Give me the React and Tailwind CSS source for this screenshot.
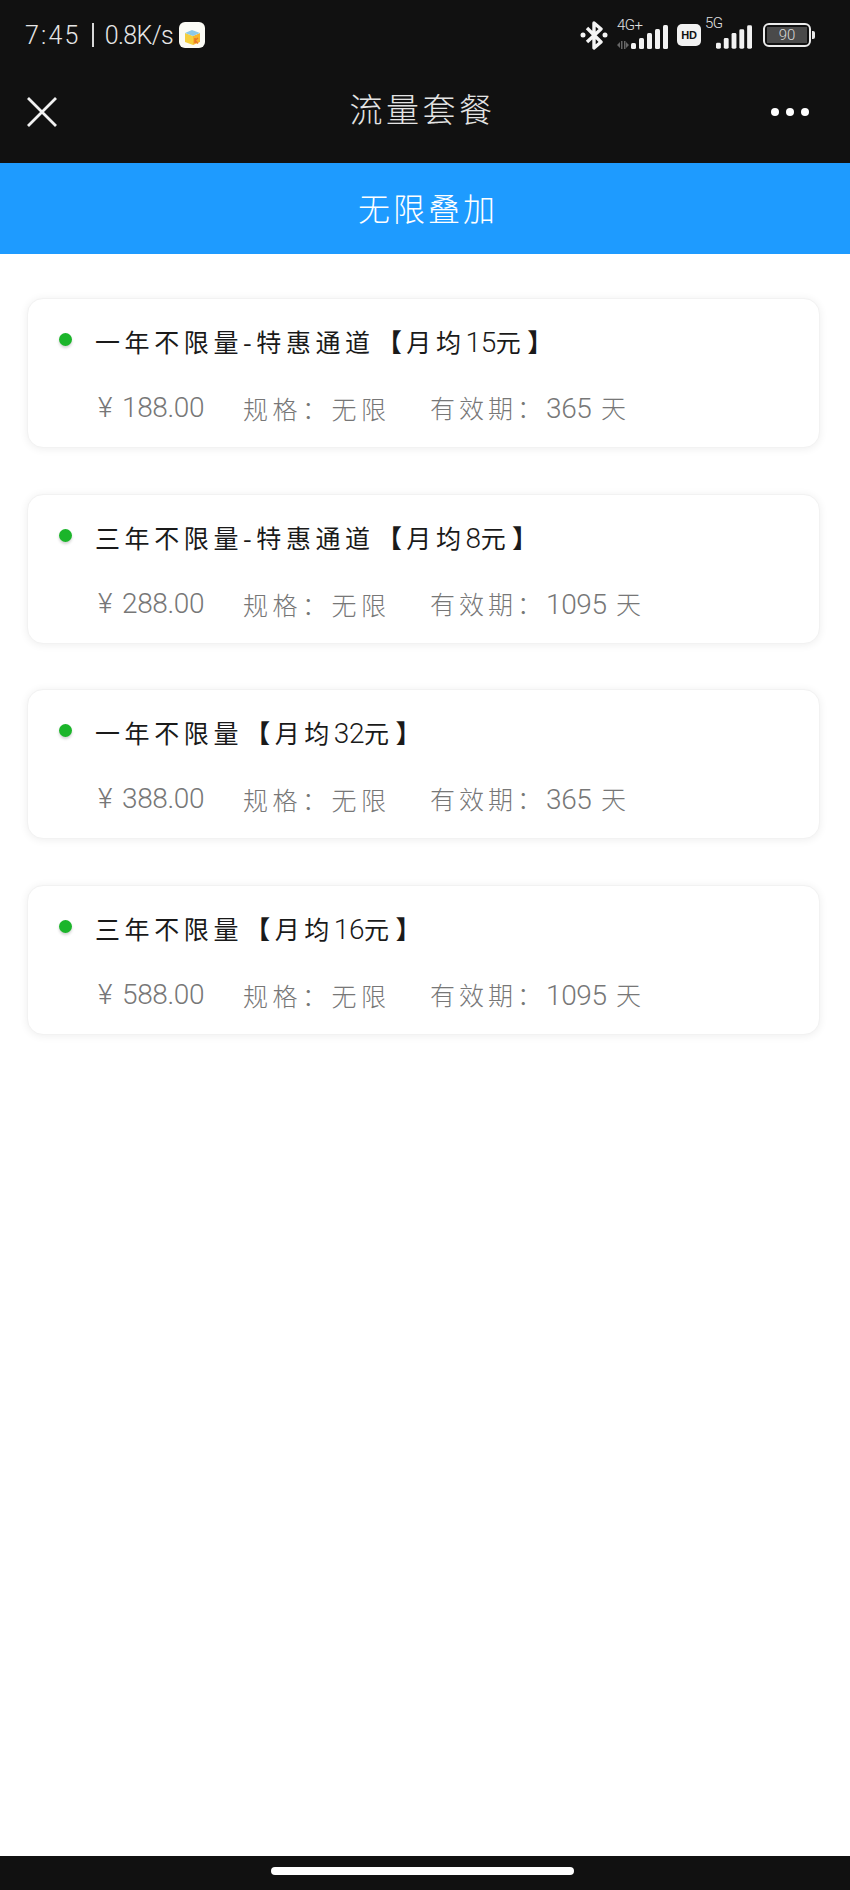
const cjk = "font-['Noto_Sans_CJK_SC','Noto_Sans',sans-serif]";

const plans = [
  { name: "一年不限量-特惠通道", deal: "15", price: "188.00", days: "365" },
  { name: "三年不限量-特惠通道", deal: "8", price: "288.00", days: "1095" },
  { name: "一年不限量", deal: "32", price: "388.00", days: "365" },
  { name: "三年不限量", deal: "16", price: "588.00", days: "1095" },
];

const Signal = ({ className }) => (
  <svg viewBox="0 0 37 24" className={className} fill="#f2f2f2">
    <rect x="0" y="18" width="5" height="6" rx="1.5" />
    <rect x="8" y="13" width="5" height="11" rx="1.5" />
    <rect x="16" y="8" width="5" height="16" rx="1.5" />
    <rect x="24" y="4" width="5" height="20" rx="1.5" />
    <rect x="32" y="0" width="5" height="24" rx="1.5" />
  </svg>
);

const StatusBar = () => (
  <div className="flex h-[68px] items-center justify-between pl-[25px] pr-[35px] pt-[2px] text-white">
    <div className="flex items-center font-['Roboto',sans-serif] text-[25px] font-light leading-none text-[#e6e6e6]">
      <span className="tracking-[2.2px]">7:45</span>
      <span className="mx-[11px] h-[24px] w-[2px] bg-[#d8d8d8]" />
      <span className="tracking-[-0.6px]">0.8K/s</span>
      <svg viewBox="0 0 26 26" className="ml-[6px] h-[26px] w-[26px]">
        <rect width="26" height="26" rx="6" fill="#fbfbf5" />
        <path d="M6 11l8 3v9l-8-3z" fill="#f5cf3d" />
        <path d="M14 14l7-3v9l-7 3z" fill="#f7b52c" />
        <path d="M6 11l7-3 8 3-7 3z" fill="#8cc9e8" />
        <path d="M16 16v5M16 18.500l3-2.500M16 18.500l3 3" stroke="#e8772a" strokeWidth="1.500" fill="none" />
      </svg>
    </div>
    <div className="flex items-center">
      {/* bluetooth */}
      <svg viewBox="0 0 28 30" className="h-[30px] w-[28px]" fill="none">
        <path d="M7 8l14 14-7 6V3l7 6L7 22" stroke="#f5f5f5" strokeWidth="3.400" strokeLinejoin="round" />
        <circle cx="3" cy="15" r="2.500" fill="#f5f5f5" />
        <circle cx="25" cy="15" r="2.500" fill="#f5f5f5" />
      </svg>
      <div className="relative ml-[9px] h-[28px] w-[51px]">
        <span className="absolute left-0 top-[-4px] font-['Roboto',sans-serif] text-[15px] font-light leading-[16px] tracking-[-0.5px] text-[#e0e0e0]">4G+</span>
        <svg viewBox="0 0 12 8" className="absolute bottom-0 left-0 h-[8px] w-[12px]" fill="#666">
          <path d="M0 4l3-3v6zM4 0h1.500v8H4zM7 0h1.500v8H7zM9 1l3 3-3 3z" />
        </svg>
        <Signal className="absolute bottom-0 right-0 h-[24px] w-[37px]" />
      </div>
      <div className="ml-[9px] flex h-[22px] w-[24px] items-center justify-center rounded-[5px] bg-[#f2f2f2] font-['Liberation_Sans',sans-serif] text-[11px] font-bold leading-none tracking-[-0.3px] text-[#111]">HD</div>
      <div className="relative ml-[4px] h-[28px] w-[47px]">
        <span className="absolute left-0 top-[-6px] font-['Roboto',sans-serif] text-[15px] font-light leading-[16px] tracking-[-0.5px] text-[#e0e0e0]">5G</span>
        <Signal className="absolute bottom-0 right-0 h-[24px] w-[36px]" />
      </div>
      <div className="ml-[11px] flex h-[24px] w-[48px] items-center justify-center rounded-[6px] border-2 border-[#ececec] p-[2px]">
        <div className="flex h-full w-full items-center justify-center bg-[#4a4a4a] font-['Roboto',sans-serif] text-[15px] font-light leading-none text-[#d8d8d8]">90</div>
      </div>
      <div className="ml-[1px] h-[8px] w-[3px] rounded-r-[2px] bg-[#ececec]" />
    </div>
  </div>
);

const num = "font-['Roboto',sans-serif] font-light tracking-[-0.4px]";

const PlanCard = ({ plan }) => (
  <div className="mb-[45.7px] h-[150px] rounded-[16px] border border-[#f2f2f2] bg-white pl-[31px] pt-[24px] shadow-[0_1px_8px_rgba(0,0,0,0.07)]">
    <div className="flex items-center">
      <span className="mt-[-5px] h-[13px] w-[13px] rounded-full bg-[#1bb52a] shadow-[0_2px_3px_rgba(0,0,0,0.18)]" />
      <span className="ml-[23px] text-[25px] leading-[36px] tracking-[4.6px] text-[#1a1a1a]">
        {plan.name}
        <span className="ml-[2px] font-black">【</span>月均<span className={`${num} text-[28px]`}>{plan.deal}</span>元<span className="ml-[2px] font-black">】</span>
      </span>
    </div>
    <div className="ml-[39px] mt-[28px] flex items-center text-[25px] font-light leading-[36px] text-[#777]">
      <span className={`w-[145px] text-[28px] ${num}`}>
        <span className="mr-[10px]">¥</span>{plan.price}
      </span>
      <span className="w-[187px] tracking-[4.5px]">规格：无限</span>
      <span className="tracking-[4px]">有效期：<span className={`${num} text-[28px]`}>{plan.days}</span> 天</span>
    </div>
  </div>
);

export default function App() {
  return (
    <div className={`flex h-[1890px] w-[850px] flex-col overflow-hidden bg-white ${cjk}`}>
      <div className="h-[163px] shrink-0 bg-[#111111]">
        <StatusBar />
        <div className="relative flex h-[86px] items-center justify-center pb-[6px]">
          <svg viewBox="0 0 30 30" className="absolute left-[27px] top-[29px] h-[30px] w-[30px]" stroke="#f2f2f2" strokeWidth="2.800" fill="none">
            <path d="M1 1l28 28M29 1L1 29" />
          </svg>
          <span className="ml-[-5px] text-[33px] font-light leading-none tracking-[3.500px] text-[#e4e4e4]">流量套餐</span>
          <div className="absolute right-[41px] top-[40px] flex gap-[7px]">
            <span className="h-[8px] w-[8px] rounded-full bg-white" />
            <span className="h-[8px] w-[8px] rounded-full bg-white" />
            <span className="h-[8px] w-[8px] rounded-full bg-white" />
          </div>
        </div>
      </div>
      <div className="flex h-[91px] shrink-0 items-center justify-center bg-[#1e9bff] pb-[3px] pl-[6px] text-[32px] font-light leading-none tracking-[3px] text-white">
        无限叠加
      </div>
      <div className="flex-1 pl-[27px] pr-[30px] pt-[44px]">
        {plans.map((plan) => (
          <PlanCard key={plan.name + plan.deal} plan={plan} />
        ))}
      </div>
      <div className="flex h-[34px] shrink-0 justify-center bg-[#111111] pr-[5px] pt-[11px]">
        <div className="h-[8px] w-[303px] rounded-full bg-white" />
      </div>
    </div>
  );
}
